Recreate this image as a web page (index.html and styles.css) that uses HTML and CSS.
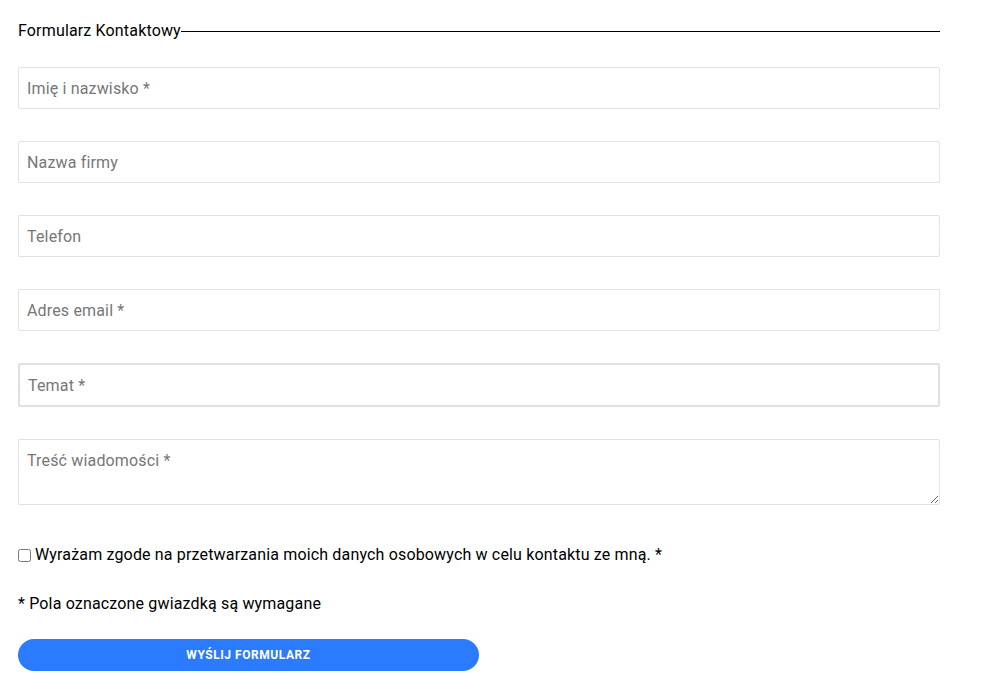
FILE: index.html
```html
<!DOCTYPE html>
<html lang="pl">
<head>
<meta charset="utf-8">
<link rel="stylesheet" href="styles.css">
</head>
<body>
<form class="form">
  <div class="title"><span>Formularz Kontaktowy</span><span class="rule"></span></div>
  <input class="field" type="text" placeholder="Imię i nazwisko *">
  <input class="field" type="text" placeholder="Nazwa firmy">
  <input class="field" type="text" placeholder="Telefon">
  <input class="field" type="text" placeholder="Adres email *">
  <input class="field field-focus" type="text" placeholder="Temat *">
  <textarea class="field area" placeholder="Treść wiadomości *"></textarea>
  <label class="consent"><input type="checkbox" class="check"> Wyrażam zgode na przetwarzania moich danych osobowych w celu kontaktu ze mną. *</label>
  <p class="note">* Pola oznaczone gwiazdką są wymagane</p>
  <button type="button" class="submit">Wyślij formularz</button>
</form>
</body>
</html>
```
FILE: styles.css
```css
html, body { margin: 0; padding: 0; background: #fff; }
body { font-family: Roboto, "Noto Sans", sans-serif; color: #000; letter-spacing: 0.16px; }
.form { width: 922px; margin-left: 18px; padding-top: 21px; display: flex; flex-direction: column; }
.title { display: flex; align-items: center; font-size: 16px; line-height: 20px; height: 20px; margin-bottom: 26px; }
.rule { flex: 1; height: 1px; background: #000; }
.field { box-sizing: border-box; width: 100%; height: 42px; border: 1px solid #e2e2e2; border-radius: 2px; padding: 0 8px; font-family: inherit; font-size: 16px; letter-spacing: 0.16px; color: #333; margin: 0 0 32px 0; background: #fff; outline: none; }
.field::placeholder { color: #777; }
.field-focus { height: 44px; border: 2px solid #e0e0e0; margin-bottom: 32px; }
.area { height: 66px; padding-top: 11px; resize: vertical; display: block; margin-bottom: 40px; }
.consent { font-size: 16px; line-height: 20px; display: flex; align-items: center; gap: 4px; }
.check { margin: 0; width: 13px; height: 13px; }
.note { font-size: 16px; line-height: 20px; margin: 29px 0 0 0; }
.submit { margin-top: 25px; width: 461px; height: 32px; border: none; border-radius: 16px; background: #2b7bff; color: #fff; font-family: inherit; font-weight: 700; font-size: 12px; text-transform: uppercase; letter-spacing: 0.55px; cursor: pointer; }
```
